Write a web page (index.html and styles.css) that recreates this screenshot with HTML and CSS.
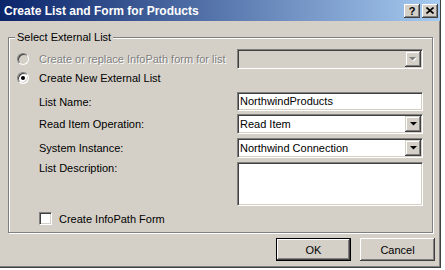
FILE: index.html
```html
<!DOCTYPE html>
<html lang="en">
<head>
    <meta charset="UTF-8">
    <title>Create List and Form for Products</title>
    <link rel="stylesheet" href="styles.css">
</head>
<body>
    <div class="dialog">
        <div class="titlebar">
            <span class="title">Create List and Form for Products</span>
            <div class="caption-buttons">
                <span class="cap-btn">?</span>
                <span class="cap-btn">
                    <svg width="8" height="7" viewBox="0 0 8 7"><path d="M0.5 0.5 L7.5 6.5 M7.5 0.5 L0.5 6.5" stroke="#000" stroke-width="1.6"/></svg>
                </span>
            </div>
        </div>

        <div class="group">
            <span class="legend">Select External List</span>

            <div class="row row-first">
                <label class="opt disabled"><span class="radio"></span>Create or replace InfoPath form for list</label>
                <div class="combo disabled">
                    <span class="value"></span>
                    <span class="drop"><svg width="8" height="5" viewBox="0 0 8 5"><path d="M1 1 H8 L4.5 4.5 Z" fill="#fff"/><path d="M0 0 H7 L3.5 3.5 Z" fill="#808080"/></svg></span>
                </div>
            </div>

            <div class="row row-radio">
                <label class="opt"><span class="radio checked"></span>Create New External List</label>
            </div>

            <div class="row row-name">
                <span class="field-label">List Name:</span>
                <div class="textbox">NorthwindProducts</div>
            </div>

            <div class="row row-combo">
                <span class="field-label">Read Item Operation:</span>
                <div class="combo">
                    <span class="value">Read Item</span>
                    <span class="drop"><svg width="7" height="4" viewBox="0 0 7 4"><path d="M0 0 H7 L3.5 3.5 Z" fill="#000"/></svg></span>
                </div>
            </div>

            <div class="row row-combo">
                <span class="field-label">System Instance:</span>
                <div class="combo">
                    <span class="value">Northwind Connection</span>
                    <span class="drop"><svg width="7" height="4" viewBox="0 0 7 4"><path d="M0 0 H7 L3.5 3.5 Z" fill="#000"/></svg></span>
                </div>
            </div>

            <div class="row row-desc">
                <span class="field-label">List Description:</span>
                <div class="textarea"></div>
            </div>

            <div class="row row-check">
                <label class="check-opt"><span class="checkbox"></span>Create InfoPath Form</label>
            </div>
        </div>

        <div class="buttons">
            <button class="btn default">OK</button>
            <button class="btn">Cancel</button>
        </div>
    </div>
</body>
</html>
```

FILE: styles.css
```css
body {
    margin: 0;
    background: #fff;
    font-family: "Liberation Sans", Arial, sans-serif;
    font-size: 11px;
    color: #000;
}
.dialog {
    width: 441px;
    height: 268px;
    box-sizing: border-box;
    background: #d4d0c8;
    border-right: 1px solid #404040;
    border-bottom: 1px solid #404040;
    box-shadow: inset -1px -1px #808080;
}
.titlebar {
    height: 21px;
    display: flex;
    align-items: center;
    justify-content: space-between;
    background: linear-gradient(to right, #0a246a, #a6caf0);
    padding-left: 4px;
    padding-right: 2px;
}
.title {
    color: #fff;
    font-weight: bold;
    font-size: 12px;
}
.caption-buttons {
    display: flex;
    gap: 2px;
}
.cap-btn {
    width: 16px;
    height: 14px;
    box-sizing: border-box;
    background: #d4d0c8;
    display: flex;
    align-items: center;
    justify-content: center;
    font-weight: bold;
    font-size: 11px;
    box-shadow: inset -1px -1px #404040, inset 1px 1px #fff, inset -2px -2px #808080;
}

/* group box */
.group {
    position: relative;
    width: 406px;
    margin: 16px 0 0 8px;
    padding: 11px 9px 7px 8px;
    border: 1px solid #808080;
    box-shadow: inset 1px 1px #fff, 1px 1px #fff;
}
.legend {
    position: absolute;
    top: -7px;
    left: 6px;
    padding: 0 2px;
    line-height: 13px;
    background: #d4d0c8;
}
.row {
    display: grid;
    grid-template-columns: 220px 186px;
    align-items: center;
}
.row-first { height: 20px; }
.row-radio { height: 16px; margin-top: 1px; }
.row-name { margin-top: 6px; }
.row-combo { margin-top: 3px; }
.row-combo + .row-combo { margin-top: 4px; }
.row-desc { margin-top: 4px; align-items: start; }
.row-desc .field-label { padding-top: 0; }
.row-check { margin-top: 6px; }

.opt, .check-opt {
    display: flex;
    align-items: center;
}
.opt.disabled {
    color: #808080;
    text-shadow: 1px 1px #fff;
}
.field-label {
    padding-left: 22px;
}
.radio {
    width: 12px;
    height: 12px;
    box-sizing: border-box;
    margin-right: 10px;
    border-radius: 50%;
    border: 1px solid;
    border-color: #808080 #fff #fff #808080;
    box-shadow: inset 1px 1px #404040, inset -1px -1px #d4d0c8;
    background: #fff;
    display: flex;
    align-items: center;
    justify-content: center;
}
.opt.disabled .radio {
    background: #d4d0c8;
}
.radio.checked::after {
    content: "";
    width: 4px;
    height: 4px;
    border-radius: 50%;
    background: #000;
}
.checkbox {
    width: 13px;
    height: 13px;
    box-sizing: border-box;
    margin-left: 22px;
    margin-right: 7px;
    border: 1px solid;
    border-color: #808080 #fff #fff #808080;
    box-shadow: inset 1px 1px #404040, inset -1px -1px #d4d0c8;
    background: #fff;
}

/* inputs */
.combo, .textbox, .textarea {
    box-sizing: border-box;
    border: 1px solid;
    border-color: #808080 #fff #fff #808080;
    padding: 1px;
    box-shadow: inset 1px 1px #404040, inset -1px -1px #d4d0c8;
    background: #fff;
}
.combo {
    height: 20px;
    display: flex;
}
.combo.disabled {
    background: #d4d0c8;
}
.combo .value {
    flex: 1;
    padding-left: 1px;
    line-height: 16px;
}
.drop {
    width: 16px;
    height: 16px;
    background: #d4d0c8;
    display: flex;
    align-items: center;
    justify-content: center;
    box-shadow: inset -1px -1px #404040, inset 1px 1px #d4d0c8, inset -2px -2px #808080, inset 2px 2px #fff;
}
.textbox {
    height: 19px;
    padding-left: 2px;
    line-height: 15px;
}
.textarea {
    height: 44px;
}

/* dialog buttons */
.buttons {
    display: flex;
    justify-content: flex-end;
    gap: 9px;
    margin-top: 5px;
    padding-right: 5px;
}
.btn {
    width: 75px;
    height: 23px;
    box-sizing: border-box;
    border: none;
    background: #d4d0c8;
    font-family: "Liberation Sans", Arial, sans-serif;
    font-size: 11px;
    color: #000;
    padding: 0;
    box-shadow: inset -1px -1px #404040, inset 1px 1px #fff, inset -2px -2px #808080;
}
.btn.default {
    border: 1px solid #000;
}
```
